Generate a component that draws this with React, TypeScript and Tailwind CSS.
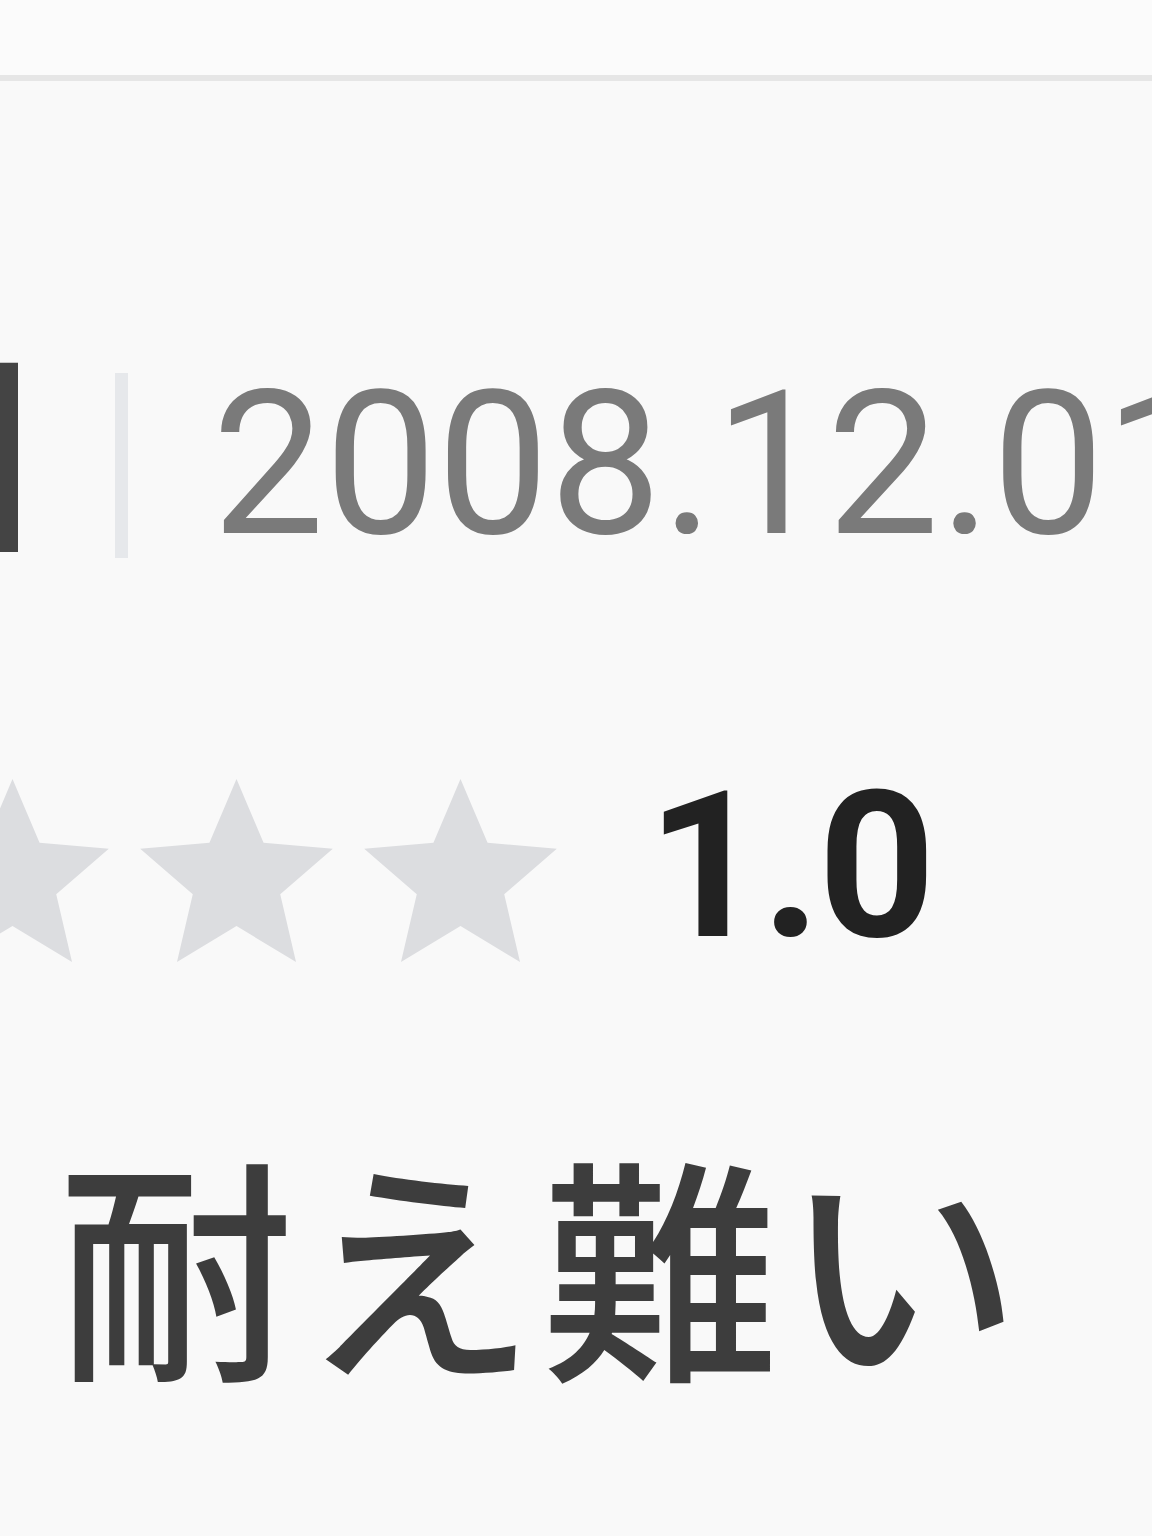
import React from "react";

const Star = ({ color }: { color: string }) => (
  <svg width="193" height="183" viewBox="2 2 20 19" className="shrink-0">
    <path
      d="M12 17.27L18.18 21l-1.64-7.03L22 9.24l-7.19-.61L12 2 9.19 8.63 2 9.24l5.46 4.73L5.82 21z"
      fill={color}
    />
  </svg>
);

export default function App() {
  return (
    <div className="w-[1152px] h-[1536px] overflow-hidden bg-[#f9f9f9] flex flex-col">
      <div className="h-[75px] bg-[#fbfbfb] shrink-0" />
      <div className="h-[6px] bg-[#e6e6e6] shrink-0" />

      {/* author / date row */}
      <div className="mt-[279px] h-[210px] flex items-center shrink-0 whitespace-nowrap">
        <div className="w-[18px] h-[210px] overflow-hidden flex justify-end items-start shrink-0">
          <span
            className="shrink-0 text-[222px] leading-none text-[#444444] mr-[-38px] mt-[-32px] font-medium"
            style={{ fontFamily: '"Noto Sans CJK JP", sans-serif' }}
          >
            日
          </span>
        </div>
        <div className="ml-[97px] w-[13px] h-[185px] bg-[#e6e8eb] shrink-0" />
        <span
          className="ml-[84px] text-[200px] leading-none text-[#7a7a7a] shrink-0"
          style={{ fontFamily: "Roboto, sans-serif" }}
        >
          2008.12.01
        </span>
      </div>

      {/* rating row */}
      <div className="mt-[190px] h-[220px] flex items-center shrink-0 whitespace-nowrap">
        <div className="ml-[-532px] flex items-center gap-[31px] shrink-0">
          <Star color="#f5a623" />
          <Star color="#dcdde0" />
          <Star color="#dcdde0" />
          <Star color="#dcdde0" />
          <Star color="#dcdde0" />
        </div>
        <span
          className="ml-[90px] mb-[8px] text-[205px] leading-none font-bold text-[#222222] tracking-[-3px] shrink-0"
          style={{ fontFamily: "Roboto, sans-serif" }}
        >
          1.0
        </span>
      </div>

      {/* title */}
      <div
        className="mt-[162px] pl-[58px] text-[236px] leading-none text-[#3d3d3d] tracking-[6px] whitespace-nowrap shrink-0 font-medium"
        style={{ fontFamily: '"Noto Sans CJK JP", sans-serif' }}
      >
        耐え難い
      </div>
    </div>
  );
}
